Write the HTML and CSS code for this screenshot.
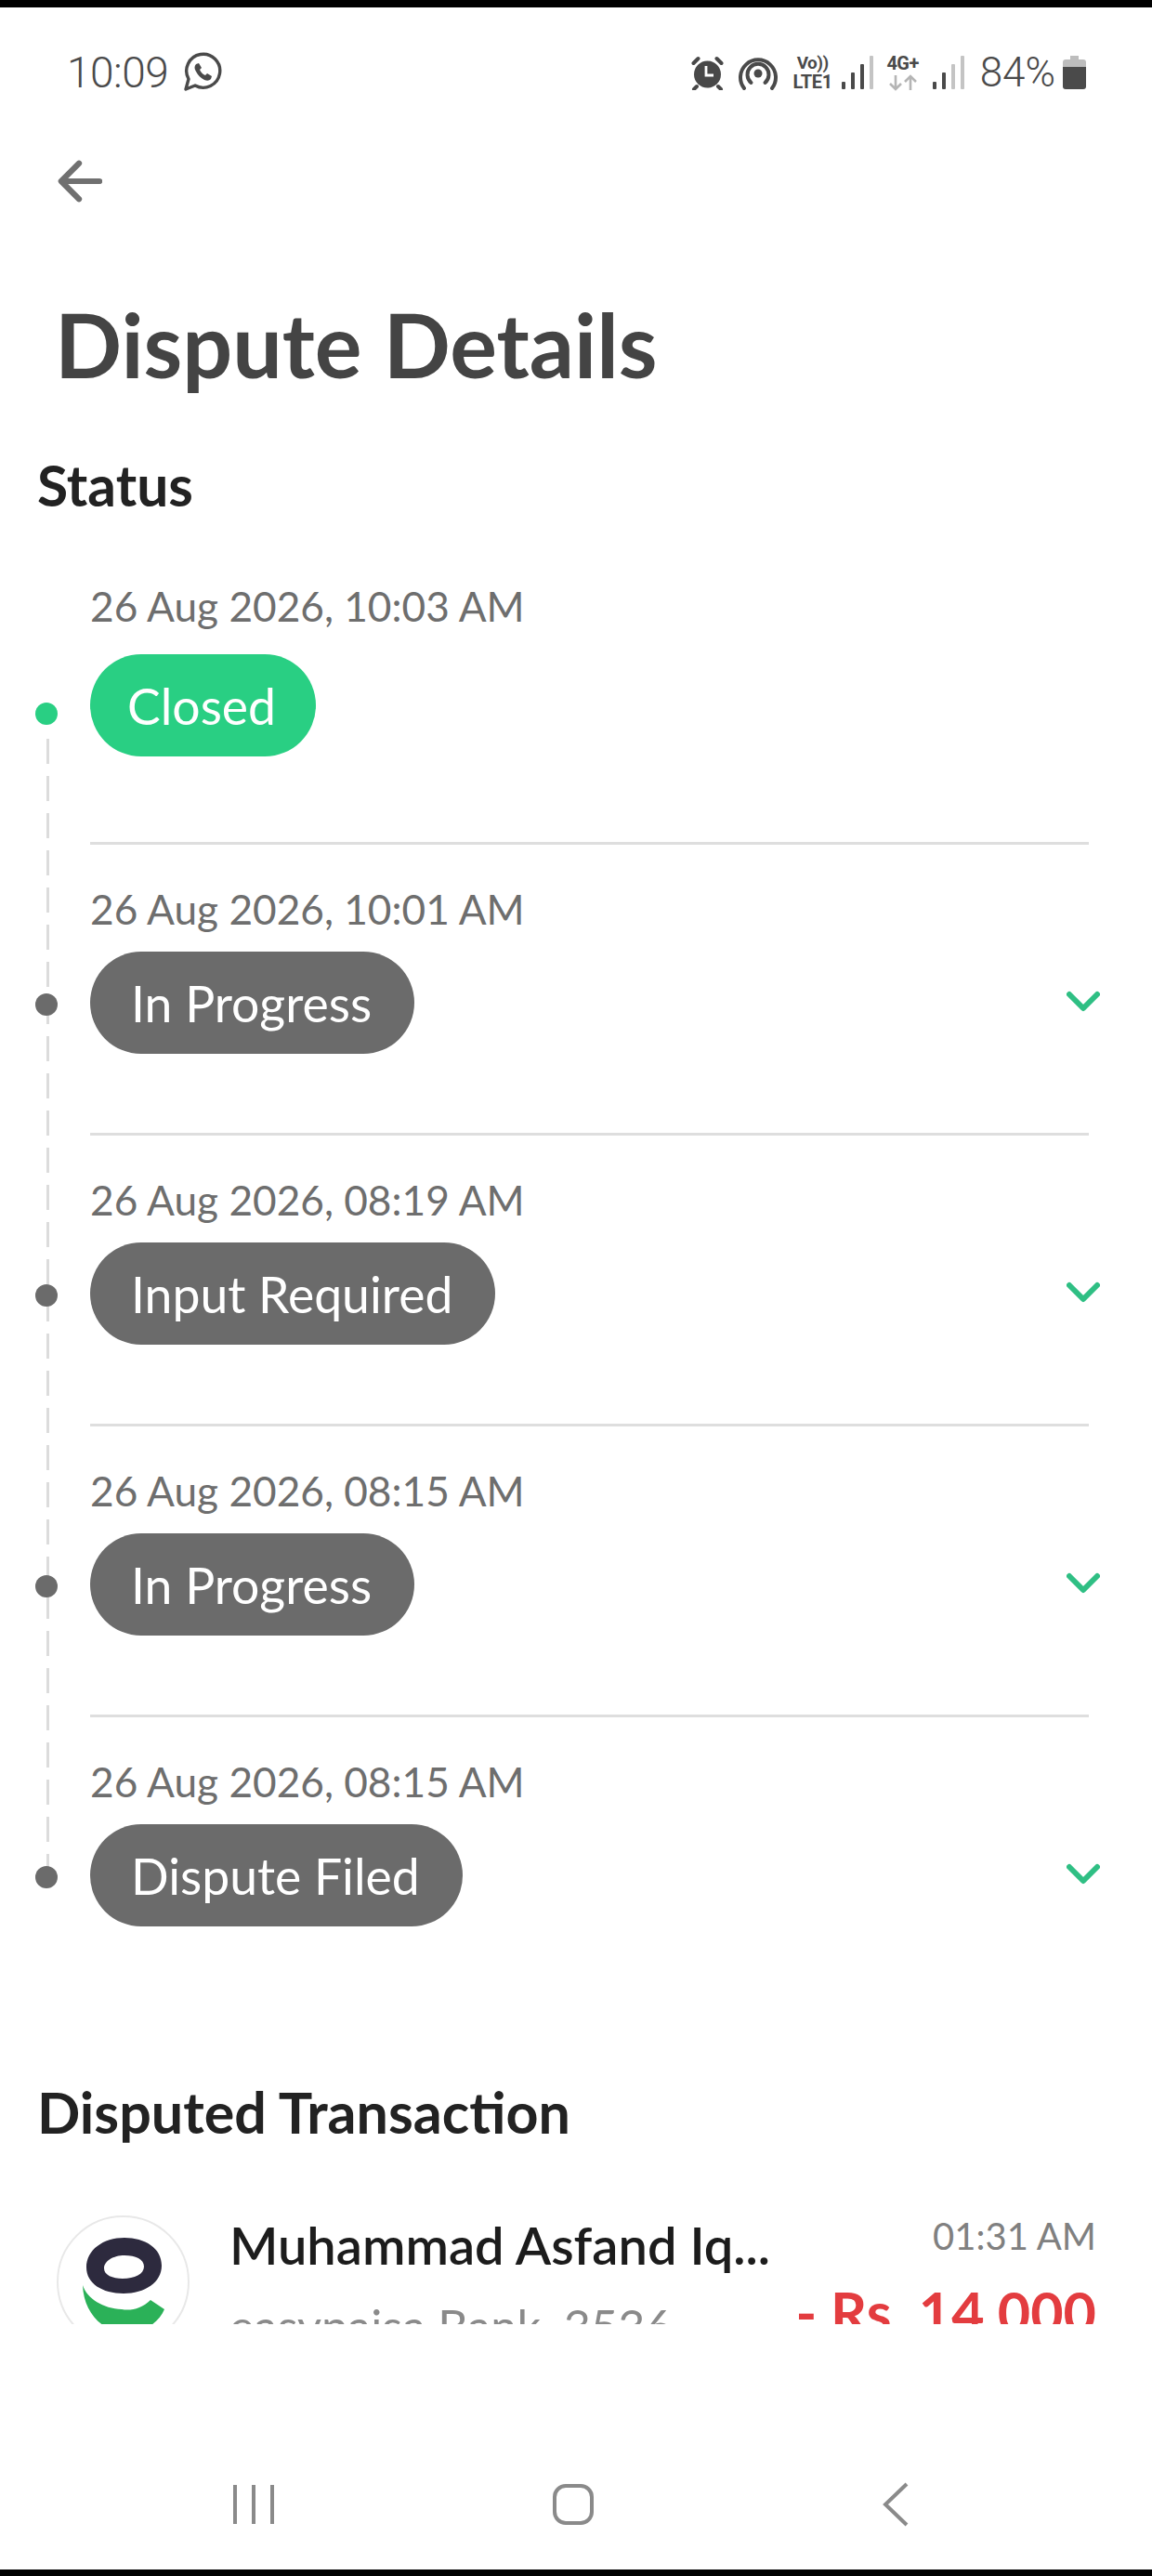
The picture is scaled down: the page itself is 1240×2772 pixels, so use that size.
FILE: index.html
```html
<!DOCTYPE html>
<html lang="en">
<head>
<meta charset="utf-8">
<title>Dispute Details</title>
<link rel="stylesheet" href="styles.css">
</head>
<body>
<div class="phone">
  <div class="edge-top"></div>
  <main class="content">
    <div class="statusbar">
      <div class="status-left">
        <span class="clock">10:09</span>
        <svg class="wa" viewBox="0 0 44 44"><path d="M4 40l3-11a18 18 0 1 1 7 7z" fill="none" stroke="#4a4a4a" stroke-width="3.4" stroke-linejoin="round"/><path d="M15 13c-2 2-2 5 0 8 2 4 5 7 9 9 3 1 5 1 7-1l1-3-5-3-2 2c-3-1-5-4-6-6l2-2-3-5z" fill="#4a4a4a"/></svg>
      </div>
      <div class="status-right">
        <svg class="ic-alarm" viewBox="0 0 35 37"><circle cx="17.500" cy="20" r="14.500" fill="#484848"/><path d="M16 11v10h8" fill="none" stroke="#fff" stroke-width="2.800"/><path d="M2.500 8l5-5M32.500 8l-5-5M6 33l-3 3M29 33l3 3" stroke="#484848" stroke-width="4" stroke-linecap="round"/></svg>
        <svg class="ic-hotspot" viewBox="0 0 44 38"><circle cx="22" cy="20" r="4.500" fill="#4a4a4a"/><path d="M14.500 30a11.500 11.500 0 1 1 15 0" fill="none" stroke="#4a4a4a" stroke-width="4" stroke-linecap="round"/><path d="M7 36a19 19 0 1 1 30 0" fill="none" stroke="#4a4a4a" stroke-width="4" stroke-linecap="round"/></svg>
        <div class="net-label">
          <span class="net-top">Vo))</span>
          <span class="net-bottom">LTE1</span>
        </div>
        <div class="bars">
          <i class="bar b1"></i><i class="bar b2"></i><i class="bar b3"></i><i class="bar b4 dim"></i>
        </div>
        <div class="net-label net-4g">
          <span class="net-top">4G+</span>
          <svg class="net-arrows" viewBox="0 0 32 18"><path d="M8 1v15M2 10l6 6 6-6M24 17V2M18 8l6-6 6 6" fill="none" stroke="#b5b5b5" stroke-width="2.600"/></svg>
        </div>
        <div class="bars">
          <i class="bar b1"></i><i class="bar b2"></i><i class="bar b3 dim"></i><i class="bar b4 dim"></i>
        </div>
        <span class="battery-text">84%</span>
        <svg class="ic-battery" viewBox="0 0 25 38"><path d="M8 1h9v4h5a3 3 0 0 1 3 3v6H0V8a3 3 0 0 1 3-3h5z" fill="#bdbdbd"/><path d="M0 13h25v21a3 3 0 0 1-3 3H3a3 3 0 0 1-3-3z" fill="#4a4a4a"/></svg>
      </div>
    </div>

    <div class="back">
      <svg viewBox="0 0 50 50"><path d="M47 25H5M24 5L4 25l20 20" fill="none" stroke="#707070" stroke-width="6.500" stroke-linecap="round" stroke-linejoin="round"/></svg>
    </div>

    <h1 class="title">Dispute Details</h1>
    <h2 class="section status-heading">Status</h2>

    <div class="timeline">
      <div class="rail"></div>
      <section class="event first">
        <div class="date">26 Aug 2026, 10:03 AM</div>
        <div class="event-line">
          <span class="dot green"></span>
          <span class="pill green">Closed</span>
        </div>
      </section>
      <section class="event">
        <div class="date">26 Aug 2026, 10:01 AM</div>
        <div class="event-line">
          <span class="dot"></span>
          <span class="pill">In Progress</span>
          <svg class="chev" viewBox="0 0 36 24"><path d="M3 4l15 15L33 4" fill="none" stroke="#2fbf84" stroke-width="6" stroke-linecap="round" stroke-linejoin="round"/></svg>
        </div>
      </section>
      <section class="event">
        <div class="date">26 Aug 2026, 08:19 AM</div>
        <div class="event-line">
          <span class="dot"></span>
          <span class="pill">Input Required</span>
          <svg class="chev" viewBox="0 0 36 24"><path d="M3 4l15 15L33 4" fill="none" stroke="#2fbf84" stroke-width="6" stroke-linecap="round" stroke-linejoin="round"/></svg>
        </div>
      </section>
      <section class="event">
        <div class="date">26 Aug 2026, 08:15 AM</div>
        <div class="event-line">
          <span class="dot"></span>
          <span class="pill">In Progress</span>
          <svg class="chev" viewBox="0 0 36 24"><path d="M3 4l15 15L33 4" fill="none" stroke="#2fbf84" stroke-width="6" stroke-linecap="round" stroke-linejoin="round"/></svg>
        </div>
      </section>
      <section class="event last">
        <div class="date">26 Aug 2026, 08:15 AM</div>
        <div class="event-line">
          <span class="dot"></span>
          <span class="pill">Dispute Filed</span>
          <svg class="chev" viewBox="0 0 36 24"><path d="M3 4l15 15L33 4" fill="none" stroke="#2fbf84" stroke-width="6" stroke-linecap="round" stroke-linejoin="round"/></svg>
        </div>
      </section>
    </div>

    <h2 class="section tx-heading">Disputed Transaction</h2>

    <div class="tx">
      <div class="avatar">
        <svg viewBox="0 0 143 143"><path fill-rule="evenodd" d="M73 24c22 0 40 11 40 30 0 18-18 30-41 30-23 0-40-11-40-28 0-19 18-32 41-32zM73 43c-12 0-22 6-22 14 0 7 9 11 20 11 13 0 23-5 23-13 0-8-9-12-21-12z" fill="#2d2a3e"/><path d="M28 75c1 30 22 51 47 51 20 0 35-11 41-25l-15-10c-9 9-21 12-31 10-20-1-37-11-42-26z" fill="#2bb158"/></svg>
      </div>
      <div class="tx-main">
        <div class="tx-name">Muhammad Asfand Iq...</div>
        <div class="tx-sub">easypaisa Bank. 3536</div>
      </div>
      <div class="tx-side">
        <div class="tx-time">01:31 AM</div>
        <div class="tx-amount">- Rs. 14,000</div>
      </div>
    </div>
  </main>

  <nav class="navbar">
    <svg class="nav-recents" viewBox="0 0 46 46"><path d="M3 2v42M23 2v42M43 2v42" stroke="#8a8a8a" stroke-width="4" fill="none"/></svg>
    <svg class="nav-home" viewBox="0 0 46 46"><rect x="3" y="3" width="40" height="40" rx="12" fill="none" stroke="#8a8a8a" stroke-width="4"/></svg>
    <svg class="nav-back" viewBox="0 0 30 48"><path d="M27 2L4 24l23 22" fill="none" stroke="#8a8a8a" stroke-width="4"/></svg>
  </nav>
  <div class="edge-bottom"></div>
</div>
</body>
</html>
```

FILE: styles.css
```css
* { box-sizing: border-box; }
html, body { margin: 0; padding: 0; background: #fff; }
body { font-family: "Lato", "Liberation Sans", sans-serif; }

.phone { width: 1240px; height: 2772px; display: flex; flex-direction: column; background: #fff; }
.edge-top { height: 8px; background: #000; flex: none; }
.edge-bottom { height: 7px; background: #000; flex: none; }

.content { height: 2493px; flex: none; overflow: hidden; }

.statusbar { height: 140px; display: flex; align-items: center; justify-content: space-between; padding: 0 71px 0 72px; color: #4a4a4a; font-family: "Roboto", sans-serif; }
.status-left { display: flex; align-items: center; gap: 15px; }
.clock { font-size: 46px; font-weight: 300; letter-spacing: -0.5px; }
.wa { width: 44px; height: 44px; }
.status-right { display: flex; align-items: center; }
.ic-alarm { width: 35px; height: 37px; margin-right: 15px; }
.ic-hotspot { width: 44px; height: 38px; margin-right: 14px; }
.net-label { display: flex; flex-direction: column; align-items: center; font-weight: 700; line-height: 20px; width: 46px; margin-right: 8px; }
.net-top { font-size: 19px; letter-spacing: -0.5px; }
.net-bottom { font-size: 20px; letter-spacing: -0.3px; }
.net-4g { width: 38px; margin-right: 13px; }
.net-4g .net-top { font-size: 20px; }
.net-arrows { display: block; width: 32px; height: 18px; margin-top: 2px; }
.bars { display: flex; align-items: flex-end; gap: 6px; height: 36px; margin-right: 13px; }
.bar { display: block; width: 4px; background: #4a4a4a; border-radius: 1px; }
.bar.dim { background: #c4c4c4; }
.b1 { height: 8px; } .b2 { height: 18px; } .b3 { height: 27px; } .b4 { height: 36px; }
.battery-text { font-size: 44px; font-weight: 300; margin: 0 8px 0 4px; }
.ic-battery { width: 25px; height: 38px; }

.back { padding-left: 62px; height: 95px; }
.back svg { display: block; width: 48px; height: 48px; margin-top: 23px; }

.title { margin: 49px 0 0; padding-left: 59px; font-size: 95px; line-height: 110px; font-weight: 700; color: #444; height: 110px; }

.section { margin: 0; padding-left: 40px; font-weight: 700; color: #222; }
.status-heading { font-size: 60.5px; line-height: 70px; margin-top: 62px; }

.timeline { position: relative; padding: 0 68px 0 97px; margin-top: 68px; }
.rail { position: absolute; left: 50px; top: 170px; height: 1226px; width: 3px; background: repeating-linear-gradient(to bottom, #dcdcdc 0 27px, transparent 27px 40px); }

.event { border-bottom: 3px solid #dedede; padding-top: 42px; padding-bottom: 85px; position: relative; }
.event.first { padding-top: 0; padding-bottom: 92px; }
.event.last { border-bottom: 0; }

.date { font-size: 44.2px; line-height: 54px; color: #6e6e6e; margin-bottom: 19px; }
.first .date { margin-bottom: 25px; }

.event-line { display: flex; align-items: center; justify-content: space-between; position: relative; }
.pill { height: 110px; padding: 0 46px 0 44px; border-radius: 55px; background: #6b6b6b; color: #fff; font-size: 53.5px; display: inline-flex; align-items: center; }
.pill.green { background: #29cf83; padding: 0 43px 0 40px; }
.dot { position: absolute; left: -59px; top: 45px; width: 24px; height: 24px; border-radius: 50%; background: #6b6b6b; }
.dot.green { background: #29cf83; top: 52px; }
.chev { width: 36px; height: 24px; margin-right: -12px; margin-top: -2px; }

.tx-heading { font-size: 61px; line-height: 70px; padding-top: 80px; }

.tx { display: flex; padding: 0 60px 0 61px; margin-top: 76px; }
.avatar { width: 143px; height: 143px; border-radius: 50%; border: 2px solid #e8e8e8; flex: none; overflow: hidden; }
.avatar svg { display: block; width: 143px; height: 143px; margin: -2px; }
.tx-main { margin-left: 43px; flex: 1; min-width: 0; }
.tx-name { font-size: 56px; line-height: 64px; font-weight: 600; color: #1c1c1c; white-space: nowrap; }
.tx-sub { font-size: 50.4px; line-height: 54px; color: #8a8a8a; margin-top: 28px; white-space: nowrap; }
.tx-side { text-align: right; margin-top: -3px; }
.tx-time { font-size: 40px; line-height: 50px; color: #808080; }
.tx-amount { font-size: 61px; line-height: 70px; font-weight: 700; color: #e33c3f; margin-top: 22px; white-space: nowrap; }

.navbar { flex: 1; display: flex; align-items: center; padding-top: 124px; }
.nav-recents { width: 46px; height: 46px; margin-left: 250px; }
.nav-home { width: 46px; height: 46px; margin-left: 298px; }
.nav-back { width: 30px; height: 48px; margin-left: 309px; }
```
